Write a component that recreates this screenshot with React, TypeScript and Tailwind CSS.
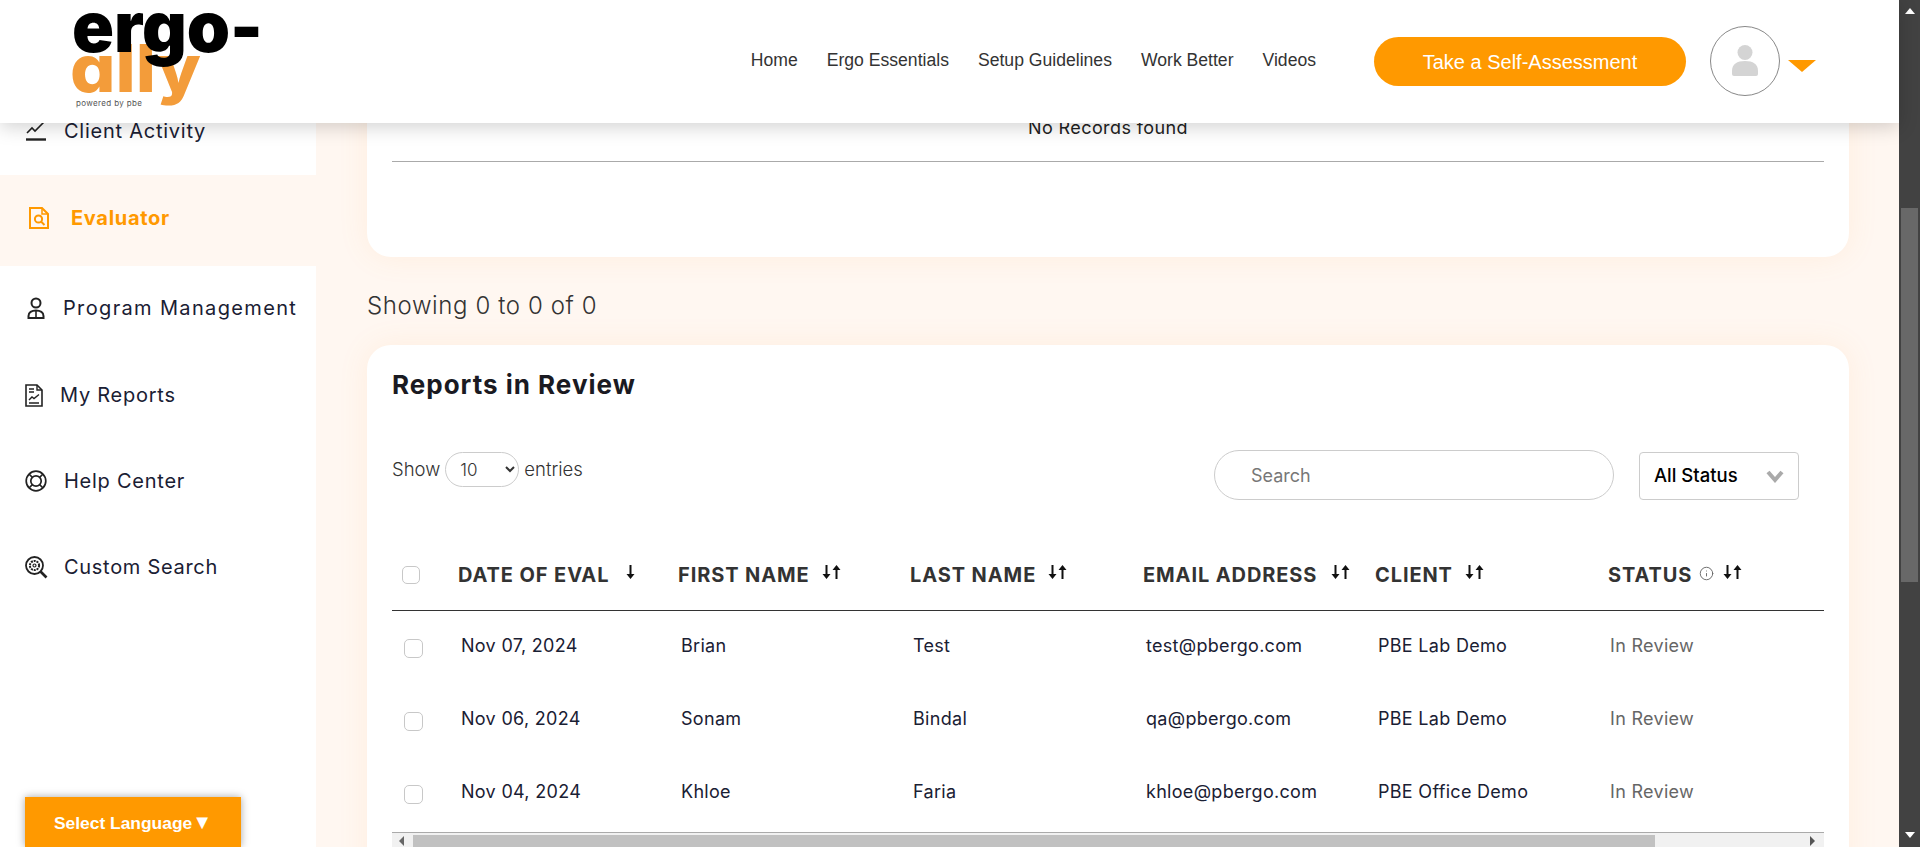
import { Info } from 'lucide-react';

const rows = [
    { date: 'Nov 07, 2024', first: 'Brian', last: 'Test', email: 'test@pbergo.com', client: 'PBE Lab Demo' },
    { date: 'Nov 06, 2024', first: 'Sonam', last: 'Bindal', email: 'qa@pbergo.com', client: 'PBE Lab Demo' },
    { date: 'Nov 04, 2024', first: 'Khloe', last: 'Faria', email: 'khloe@pbergo.com', client: 'PBE Office Demo' },
];

const navLinks = ['Home', 'Ergo Essentials', 'Setup Guidelines', 'Work Better', 'Videos'];

function Logo() {
    return (
        <svg width="200" height="100" viewBox="0 0 200 100" className="block overflow-visible [font-feature-settings:'cv11']" aria-label="ergo-ally">
            <text x="-2" y="83" fontFamily="Inter, sans-serif" fontWeight="800" fontSize="66" fill="#f39c3a" textLength="131" lengthAdjust="spacingAndGlyphs">
                ally
            </text>
            <text x="0" y="43" fontFamily="Inter, sans-serif" fontWeight="900" fontSize="70" fill="#000" textLength="191" lengthAdjust="spacingAndGlyphs">
                ergo-
            </text>
            <text x="4" y="97" fontFamily="Inter, sans-serif" fontSize="8" fill="#555" textLength="66">
                powered by pbe
            </text>
        </svg>
    );
}

function SortArrows({ single = false, className = '' }: { single?: boolean; className?: string }) {
    return (
        <svg width={single ? 9 : 20} height="14" viewBox={single ? '0 0 9 14' : '0 0 20 14'} className={`mb-[6px] shrink-0 ${className}`} fill="#111">
            <path d="M3.5 0h2v9h3l-4 5-4-5h3z" />
            {!single && <path d="M13.5 14h2V5h3l-4-5-4 5h3z" />}
        </svg>
    );
}

function HeadCell({ label, single, info, arrowClass }: { label: string; single?: boolean; info?: boolean; arrowClass?: string }) {
    return (
        <div className="flex items-center gap-[12px] whitespace-nowrap">
            <span className="text-[20px] font-bold tracking-[0.9px] text-[#333]">{label}</span>
            {info && <Info size={15} strokeWidth={1.5} className="-mx-[5px] mb-[3px] text-[#666]" />}
            <SortArrows single={single} className={arrowClass} />
        </div>
    );
}

function Checkbox({ className }: { className: string }) {
    return <span className={`block rounded-[5px] border border-[#c8c8c8] bg-white ${className}`} />;
}

function SideItem({ icon, label, active, className }: { icon: React.ReactNode; label: string; active?: boolean; className: string }) {
    return (
        <div className={`flex items-center pl-[25px] ${active ? 'h-[91px] bg-[#fff7f1] font-bold text-[#ff9900]' : 'h-[86px] text-[#1a2033]'} ${className}`}>
            {icon}
            <span className="text-[20px] whitespace-nowrap">{label}</span>
        </div>
    );
}

const ActivityIcon = (
    <svg width="22" height="20" viewBox="0 0 22 20" fill="none" stroke="#222" strokeWidth="2">
        <path d="M2 12l5-5 3 3 9-9" strokeWidth="1.6" />
        <path d="M1 18.5h20" strokeWidth="2.4" />
    </svg>
);

const EvaluatorIcon = (
    <svg width="22" height="24" viewBox="0 0 22 24" fill="none" stroke="#ff9900" strokeWidth="2" className="ml-[3px]">
        <path d="M2 2h12l6 6v14H2z" />
        <path d="M14 2v6h6" strokeWidth="1.5" />
        <circle cx="10.5" cy="13" r="3.6" />
        <path d="M13 15.5l3.5 3.5" />
    </svg>
);

const ProgramIcon = (
    <svg width="18" height="22" viewBox="0 0 18 22" fill="none" stroke="#222" strokeWidth="2" className="ml-[2px]">
        <circle cx="9" cy="6" r="4.5" />
        <path d="M1.5 21v-2c0-3.5 3.2-5.5 7.5-5.5s7.5 2 7.5 5.5v2z" />
        <path d="M9 13.500V21" strokeWidth="1.6" />
    </svg>
);

const ReportsIcon = (
    <svg width="18" height="23" viewBox="0 0 18 23" fill="none" stroke="#222" strokeWidth="1.4">
        <path d="M1 1h11l5 5v16H1z" strokeWidth="1.6" />
        <path d="M12 1v5h5" />
        <path d="M4 5h5M4 8h5M4 19h10" />
        <path d="M4 16l3-3 2 1.500 5-4" />
    </svg>
);

const HelpIcon = (
    <svg width="22" height="22" viewBox="0 0 22 22" fill="none" stroke="#222" strokeWidth="1.7">
        <circle cx="11" cy="11" r="9.8" />
        <circle cx="11" cy="11" r="5.2" />
        <path d="M4 4l3.500 3.500M18 4l-3.500 3.500M4 18l3.500-3.500M18 18l-3.500-3.500" />
    </svg>
);

const CustomSearchIcon = (
    <svg width="23" height="23" viewBox="0 0 23 23" fill="none" stroke="#222" strokeWidth="1.8">
        <circle cx="9.500" cy="9.500" r="8.500" />
        <circle cx="9.500" cy="9.500" r="4.600" strokeDasharray="2 0.900" strokeWidth="2" />
        <circle cx="9.500" cy="9.500" r="1.500" strokeWidth="1.200" />
        <path d="M15.500 15.500l6 6" strokeWidth="2.600" />
    </svg>
);

export default function App() {
    return (
        <div className="relative flex h-[847px] overflow-hidden bg-white font-['Inter',sans-serif]">
            <div className="relative min-w-0 flex-1">
                <header className="absolute inset-x-0 top-0 z-10 flex h-[123px] items-center bg-white pb-[2px] pl-[72px] pr-[83px] font-['Liberation_Sans',sans-serif] shadow-[0_4px_18px_rgba(0,0,0,0.18)]">
                    <div className="self-start pt-[9px]">
                        <Logo />
                    </div>
                    <nav className="ml-auto flex items-center gap-[29px] text-[17.6px] text-[#333]">
                        {navLinks.map((link) => (
                            <a key={link} className="whitespace-nowrap">
                                {link}
                            </a>
                        ))}
                    </nav>
                    <button className="ml-[58px] mt-[2px] h-[49px] w-[312px] rounded-full bg-[#ff9900] text-[20px] text-white">
                        Take a Self-Assessment
                    </button>
                    <div className="ml-[24px] flex h-[70px] w-[70px] items-center justify-center rounded-full border border-[#888]">
                        <svg width="26" height="32" viewBox="0 0 26 32" fill="#d4d4d4">
                            <circle cx="13" cy="7.500" r="7.500" />
                            <path d="M0 26c0-7 5-10 13-10s13 3 13 10v3a2 2 0 01-2 2H2a2 2 0 01-2-2z" />
                        </svg>
                    </div>
                    <svg width="28" height="12" viewBox="0 0 28 12" fill="#ff9900" className="ml-[8px] mt-[10px]">
                        <path d="M0 0h28L14 12z" />
                    </svg>
                </header>

                <div className="flex h-full">
                    <aside className="w-[316px] shrink-0 bg-white pt-[88px]">
                        <SideItem icon={ActivityIcon} label="Client Activity" className="h-[87px] gap-[17px] pb-[2px] tracking-[0.75px]" />
                        <SideItem icon={EvaluatorIcon} label="Evaluator" active className="gap-[21px] pb-[6px] tracking-[0.7px]" />
                        <SideItem icon={ProgramIcon} label="Program Management" className="gap-[18px] pb-[2px] tracking-[1.35px]" />
                        <SideItem icon={ReportsIcon} label="My Reports" className="gap-[17px] tracking-[0.75px]" />
                        <SideItem icon={HelpIcon} label="Help Center" className="gap-[17px] tracking-[0.75px]" />
                        <SideItem icon={CustomSearchIcon} label="Custom Search" className="gap-[16px] tracking-[0.7px]" />
                    </aside>

                    <main className="min-w-0 flex-1 bg-[#fff7f1] px-[50px] pl-[51px]">
                        <section className="h-[257px] rounded-b-[24px] bg-white px-[25px] pt-[117px] shadow-[0_0_30px_rgba(255,160,70,0.1)]">
                            <p className="h-[45px] border-b border-[#aaa] text-center text-[18px] leading-[22px] tracking-[0.4px] text-[#222]">No Records found</p>
                        </section>

                        <p className="mt-[32px] h-[56px] text-[24px] leading-[34px] font-light tracking-[0.6px] text-[#333]">Showing 0 to 0 of 0</p>

                        <section className="rounded-[24px] bg-white px-[25px] pb-[40px] pt-[25px] shadow-[0_0_30px_rgba(255,160,70,0.1)]">
                            <h2 className="text-[26px] leading-[30px] font-bold tracking-[1px] text-[#1a1a22]">Reports in Review</h2>

                            <div className="mt-[50px] flex items-start">
                                <div className="mt-[2px] flex items-center gap-[5px] text-[18.5px] font-light text-[#333]">
                                    <span>Show</span>
                                    <select defaultValue="10" className="h-[35px] w-[74px] rounded-[18px] border border-[#ccc] bg-white pl-[10px] text-[17px]">
                                        <option>10</option>
                                        <option>25</option>
                                        <option>50</option>
                                    </select>
                                    <span>entries</span>
                                </div>
                                <input
                                    placeholder="Search"
                                    className="ml-auto h-[50px] w-[400px] rounded-[25px] border border-[#ccc] pl-[36px] text-[18px] placeholder:text-[#777]"
                                />
                                <div className="mt-[2px] ml-[25px] mr-[25px] flex h-[48px] w-[160px] items-center justify-between rounded-[4px] border border-[#ccc] pl-[14px] pr-[14px] text-[18.5px] font-medium text-black">
                                    All Status
                                    <svg width="18" height="13" viewBox="0 0 18 13" fill="none" stroke="#aaa" strokeWidth="4">
                                        <path d="M2 2l7 8 7-8" />
                                    </svg>
                                </div>
                            </div>

                            <table className="mt-[40px] w-full table-fixed border-collapse">
                                <thead>
                                    <tr className="h-[70px] border-b border-[#333]">
                                        <th className="w-[66px] p-0 pl-[10px] font-normal">
                                            <Checkbox className="h-[18px] w-[18px]" />
                                        </th>
                                        <th className="w-[220px] p-0 text-left">
                                            <HeadCell label="DATE OF EVAL" single arrowClass="ml-[5px]" />
                                        </th>
                                        <th className="w-[232px] p-0 text-left">
                                            <HeadCell label="FIRST NAME" />
                                        </th>
                                        <th className="w-[233px] p-0 text-left">
                                            <HeadCell label="LAST NAME" />
                                        </th>
                                        <th className="w-[232px] p-0 text-left">
                                            <HeadCell label="EMAIL ADDRESS" arrowClass="ml-[2px]" />
                                        </th>
                                        <th className="w-[233px] p-0 text-left">
                                            <HeadCell label="CLIENT" />
                                        </th>
                                        <th className="p-0 text-left">
                                            <HeadCell label="STATUS" info arrowClass="ml-[2px]" />
                                        </th>
                                    </tr>
                                </thead>
                                <tbody className="text-[18px] tracking-[0.3px] text-[#1a2033]">
                                    {rows.map((row) => (
                                        <tr key={row.email} className="h-[73px]">
                                            <td className="p-0 pl-[12px]">
                                                <Checkbox className="h-[19px] w-[19px] translate-y-[2px]" />
                                            </td>
                                            <td className="p-0 pb-[2px] pl-[3px]">{row.date}</td>
                                            <td className="p-0 pb-[2px] pl-[3px]">{row.first}</td>
                                            <td className="p-0 pb-[2px] pl-[3px]">{row.last}</td>
                                            <td className="p-0 pb-[2px] pl-[3px]">{row.email}</td>
                                            <td className="p-0 pb-[2px] pl-[3px]">{row.client}</td>
                                            <td className="p-0 pb-[2px] pl-[2px] text-[#666]">In Review</td>
                                        </tr>
                                    ))}
                                </tbody>
                            </table>

                            {/* table's own horizontal scrollbar */}
                            <div className="mt-[3px] flex h-[15px] items-center border-t border-[#aaa] bg-[#f1f1f1] pt-[2px]">
                                <svg width="21" height="10" viewBox="0 0 21 10" fill="#666" className="shrink-0">
                                    <path d="M12 0v10L7 5z" />
                                </svg>
                                <div className="h-full w-[1242px] bg-[#c1c1c1]" />
                                <svg width="10" height="10" viewBox="0 0 10 10" fill="#555" className="ml-auto mr-[5px]">
                                    <path d="M1 0v10l5-5z" />
                                </svg>
                            </div>
                        </section>
                    </main>
                </div>

                <button className="absolute bottom-0 left-[25px] h-[50px] w-[216px] bg-[#ff9900] pt-[2px] font-['Liberation_Sans',sans-serif] text-[17.4px] font-bold text-white shadow-[0_0_8px_rgba(0,0,0,0.35)]">
                    Select Language<span className="text-[20px] leading-none">▼</span>
                </button>
            </div>

            {/* browser scrollbar */}
            <div className="relative w-[21px] shrink-0 bg-[#424242]">
                <svg width="10" height="6" viewBox="0 0 10 6" fill="#fff" className="absolute left-[6px] top-[8px]">
                    <path d="M0 6h10L5 0z" />
                </svg>
                <div className="absolute left-[2px] right-[2px] top-[208px] h-[374px] bg-[#686868]" />
                <svg width="10" height="6" viewBox="0 0 10 6" fill="#fff" className="absolute bottom-[9px] left-[6px]">
                    <path d="M0 0h10L5 6z" />
                </svg>
            </div>
        </div>
    );
}
